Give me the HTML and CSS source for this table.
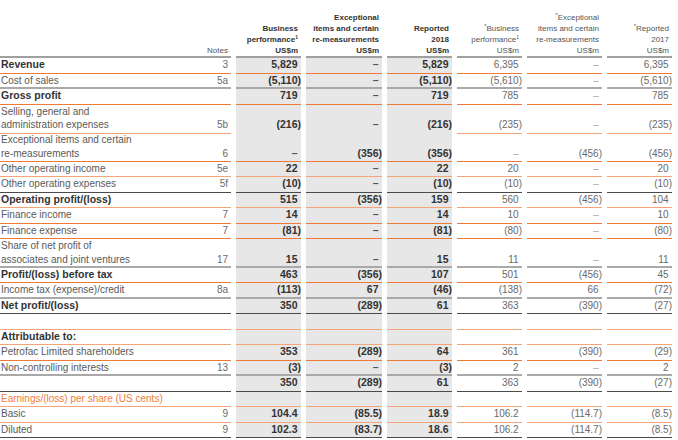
FILE: index.html
```html
<!DOCTYPE html>
<html>
<head>
<meta charset="utf-8">
<link rel="stylesheet" href="styles.css">
</head>
<body>
<div class="t">
  <div class="row hd">
    <div class="lb"><span></span><span class="nt">Notes</span></div>
    <div class="h hb"><span>Business<br>performance<sup>1</sup><br>US$m</span></div>
    <div class="h hb"><span>Exceptional<br>items and certain<br>re-measurements<br>US$m</span></div>
    <div class="h hb"><span>Reported<br>2018<br>US$m</span></div>
    <div class="h"><span><sup class="ast">*</sup>Business<br>performance<sup>1</sup><br>US$m</span></div>
    <div class="h"><span><sup class="ast">*</sup>Exceptional<br>items and certain<br>re-measurements<br>US$m</span></div>
    <div class="h"><span><sup class="ast">*</sup>Reported<br>2017<br>US$m</span></div>
  </div>

  <div class="row o b">
    <div class="lb"><span>Revenue</span><span class="nt">3</span></div>
    <div class="s c">5,829</div><div class="s c ds">–</div><div class="s c">5,829</div>
    <div class="c">6,395</div><div class="c ds">–</div><div class="c">6,395</div>
  </div>
  <div class="row g">
    <div class="lb"><span>Cost of sales</span><span class="nt">5a</span></div>
    <div class="s c ng">(5,110)</div><div class="s c ds">–</div><div class="s c ng">(5,110)</div>
    <div class="c ng">(5,610)</div><div class="c ds">–</div><div class="c ng">(5,610)</div>
  </div>
  <div class="row o b">
    <div class="lb"><span>Gross profit</span><span class="nt"></span></div>
    <div class="s c">719</div><div class="s c ds">–</div><div class="s c">719</div>
    <div class="c">785</div><div class="c ds">–</div><div class="c">785</div>
  </div>
  <div class="row r2 ol">
    <div class="lb"><span>Selling, general and<br>administration expenses</span><span class="nt">5b</span></div>
    <div class="s c ng">(216)</div><div class="s c ds">–</div><div class="s c ng">(216)</div>
    <div class="c ng">(235)</div><div class="c ds">–</div><div class="c ng">(235)</div>
  </div>
  <div class="row r2 o">
    <div class="lb"><span>Exceptional items and certain<br>re-measurements</span><span class="nt">6</span></div>
    <div class="s c ds">–</div><div class="s c ng">(356)</div><div class="s c ng">(356)</div>
    <div class="c ds">–</div><div class="c ng">(456)</div><div class="c ng">(456)</div>
  </div>
  <div class="row ol">
    <div class="lb"><span>Other operating income</span><span class="nt">5e</span></div>
    <div class="s c">22</div><div class="s c ds">–</div><div class="s c">22</div>
    <div class="c">20</div><div class="c ds">–</div><div class="c">20</div>
  </div>
  <div class="row d">
    <div class="lb"><span>Other operating expenses</span><span class="nt">5f</span></div>
    <div class="s c ng">(10)</div><div class="s c ds">–</div><div class="s c ng">(10)</div>
    <div class="c ng">(10)</div><div class="c ds">–</div><div class="c ng">(10)</div>
  </div>
  <div class="row ol b">
    <div class="lb"><span>Operating profit/(loss)</span><span class="nt"></span></div>
    <div class="s c">515</div><div class="s c ng">(356)</div><div class="s c">159</div>
    <div class="c">560</div><div class="c ng">(456)</div><div class="c">104</div>
  </div>
  <div class="row o">
    <div class="lb"><span>Finance income</span><span class="nt">7</span></div>
    <div class="s c">14</div><div class="s c ds">–</div><div class="s c">14</div>
    <div class="c">10</div><div class="c ds">–</div><div class="c">10</div>
  </div>
  <div class="row o">
    <div class="lb"><span>Finance expense</span><span class="nt">7</span></div>
    <div class="s c ng">(81)</div><div class="s c ds">–</div><div class="s c ng">(81)</div>
    <div class="c ng">(80)</div><div class="c ds">–</div><div class="c ng">(80)</div>
  </div>
  <div class="row r2 g">
    <div class="lb"><span>Share of net profit of<br>associates and joint ventures</span><span class="nt">17</span></div>
    <div class="s c">15</div><div class="s c ds">–</div><div class="s c">15</div>
    <div class="c">11</div><div class="c ds">–</div><div class="c">11</div>
  </div>
  <div class="row o b">
    <div class="lb"><span>Profit/(loss) before tax</span><span class="nt"></span></div>
    <div class="s c">463</div><div class="s c ng">(356)</div><div class="s c">107</div>
    <div class="c">501</div><div class="c ng">(456)</div><div class="c">45</div>
  </div>
  <div class="row g">
    <div class="lb"><span>Income tax (expense)/credit</span><span class="nt">8a</span></div>
    <div class="s c ng">(113)</div><div class="s c">67</div><div class="s c ng">(46)</div>
    <div class="c ng">(138)</div><div class="c">66</div><div class="c ng">(72)</div>
  </div>
  <div class="row d b">
    <div class="lb"><span>Net profit/(loss)</span><span class="nt"></span></div>
    <div class="s c">350</div><div class="s c ng">(289)</div><div class="s c">61</div>
    <div class="c">363</div><div class="c ng">(390)</div><div class="c ng">(27)</div>
  </div>
  <div class="row ol">
    <div class="lb"><span></span><span class="nt"></span></div>
    <div class="s"></div><div class="s"></div><div class="s"></div>
    <div></div><div></div><div></div>
  </div>
  <div class="row ol b">
    <div class="lb"><span>Attributable to:</span><span class="nt"></span></div>
    <div class="s"></div><div class="s"></div><div class="s"></div>
    <div></div><div></div><div></div>
  </div>
  <div class="row o">
    <div class="lb"><span>Petrofac Limited shareholders</span><span class="nt"></span></div>
    <div class="s c">353</div><div class="s c ng">(289)</div><div class="s c">64</div>
    <div class="c">361</div><div class="c ng">(390)</div><div class="c ng">(29)</div>
  </div>
  <div class="row g">
    <div class="lb"><span>Non-controlling interests</span><span class="nt">13</span></div>
    <div class="s c ng">(3)</div><div class="s c ds">–</div><div class="s c ng">(3)</div>
    <div class="c">2</div><div class="c ds">–</div><div class="c">2</div>
  </div>
  <div class="row d">
    <div class="lb"><span></span><span class="nt"></span></div>
    <div class="s c">350</div><div class="s c ng">(289)</div><div class="s c">61</div>
    <div class="c">363</div><div class="c ng">(390)</div><div class="c ng">(27)</div>
  </div>
  <div class="row ol">
    <div class="lb"><span class="orange">Earnings/(loss) per share (US cents)</span><span class="nt"></span></div>
    <div class="s"></div><div class="s"></div><div class="s"></div>
    <div></div><div></div><div></div>
  </div>
  <div class="row ol">
    <div class="lb"><span>Basic</span><span class="nt">9</span></div>
    <div class="s c">104.4</div><div class="s c ng">(85.5)</div><div class="s c">18.9</div>
    <div class="c">106.2</div><div class="c ng">(114.7)</div><div class="c ng">(8.5)</div>
  </div>
  <div class="row d">
    <div class="lb"><span>Diluted</span><span class="nt">9</span></div>
    <div class="s c">102.3</div><div class="s c ng">(83.7)</div><div class="s c">18.6</div>
    <div class="c">106.2</div><div class="c ng">(114.7)</div><div class="c ng">(8.5)</div>
  </div>
</div>
</body>
</html>
```

FILE: styles.css
```css
* {
  box-sizing: border-box;
  margin: 0;
  padding: 0;
}
body {
  margin: 0;
  background: #fff;
  font-family: "Liberation Sans", Arial, sans-serif;
  width: 678px;
  height: 440px;
  overflow: hidden;
}
.row {
  display: grid;
  grid-template-columns: 231px 65px 76px 65px 65px 75px 65px;
  column-gap: 5px;
  height: 15.5px;
}
.row.r2 {
  height: 28.6px;
}
.row > div {
  display: flex;
  align-items: flex-end;
  justify-content: flex-end;
  border-bottom: 1px solid #ee7a37;
  padding-bottom: 1px;
  line-height: 13.5px;
  font-size: 10px;
  color: #6a6a6a;
  white-space: nowrap;
}
.row > .lb {
  justify-content: space-between;
  padding-left: 1px;
  padding-right: 3px;
  color: #5a5a5a;
}
.row > .s {
  background: #e7e7e7;
  font-weight: bold;
  font-size: 10.5px;
  color: #333;
}
.row > .c::after {
  content: ")";
  visibility: hidden;
}
.row > .c.ng::after {
  content: none;
}
.row > .ds {
  color: #aaa;
}
.row > .s.ds {
  color: #555;
}
.ol > div {
  border-bottom-color: #f4a477;
}
.g > div {
  border-bottom: 2px solid #a9a9a9;
  padding-bottom: 0;
}
.d > div {
  border-bottom-color: #4a4a4a;
}
.b > .lb {
  font-weight: bold;
  font-size: 10.5px;
  color: #333;
}
.lb .nt {
  font-weight: normal;
  font-size: 10px;
  color: #6a6a6a;
}
.orange {
  color: #f07d3a;
}
.row.hd {
  height: 58px;
}
.row.hd > div {
  border-bottom: 2px solid #a0a0a0;
  padding-bottom: 0;
  line-height: 11px;
  font-size: 8px;
  text-align: right;
  padding-right: 3px;
  color: #555;
  background: #fff;
}
.row.hd .nt {
  font-size: 8px;
  color: #555;
}
.row.hd > .hb {
  font-weight: bold;
  color: #333;
}
.h > span {
  display: block;
}
.h sup {
  font-size: 5px;
  vertical-align: 3px;
  line-height: 0;
}
.h sup.ast {
  font-size: 6px;
}
```
